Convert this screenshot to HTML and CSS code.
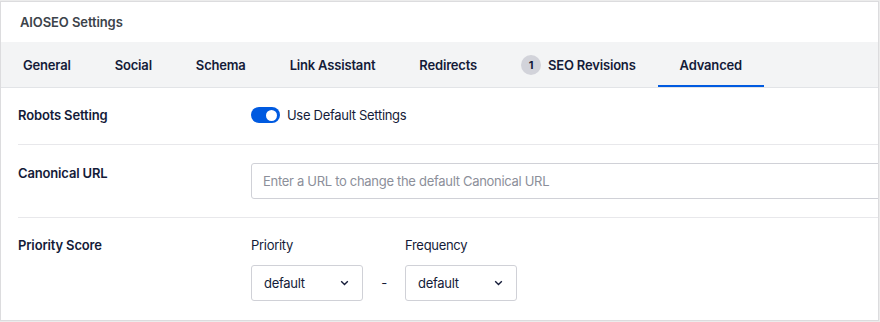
FILE: index.html
```html
<!DOCTYPE html>
<html lang="en">
<head>
  <meta charset="UTF-8">
  <title>AIOSEO Settings</title>
  <link rel="stylesheet" href="styles.css">
</head>
<body>
  <div class="metabox">
    <div class="metabox-header">AIOSEO Settings</div>

    <nav class="tabs">
      <div class="tab">General</div>
      <div class="tab">Social</div>
      <div class="tab">Schema</div>
      <div class="tab">Link Assistant</div>
      <div class="tab">Redirects</div>
      <div class="tab"><span class="badge">1</span>SEO Revisions</div>
      <div class="tab active">Advanced</div>
    </nav>

    <div class="settings">
      <div class="row">
        <div class="row-label">Robots Setting</div>
        <div class="row-content">
          <label class="toggle-wrap">
            <span class="toggle"><span class="knob"></span></span>
            Use Default Settings
          </label>
        </div>
      </div>

      <div class="row row-input">
        <div class="row-label">Canonical URL</div>
        <div class="row-content">
          <input class="text-input" type="text" placeholder="Enter a URL to change the default Canonical URL">
        </div>
      </div>

      <div class="row last">
        <div class="row-label">Priority Score</div>
        <div class="row-content priority">
          <div class="field">
            <div class="field-label">Priority</div>
            <div class="select">
              <span>default</span>
              <svg width="9" height="6" viewBox="0 0 9 6"><path d="M1.2 1.3 L4.5 4.5 L7.8 1.3" fill="none" stroke="#141b38" stroke-width="1.4"/></svg>
            </div>
          </div>
          <div class="dash">-</div>
          <div class="field">
            <div class="field-label">Frequency</div>
            <div class="select">
              <span>default</span>
              <svg width="9" height="6" viewBox="0 0 9 6"><path d="M1.2 1.3 L4.5 4.5 L7.8 1.3" fill="none" stroke="#141b38" stroke-width="1.4"/></svg>
            </div>
          </div>
        </div>
      </div>
    </div>
  </div>
</body>
</html>
```

FILE: styles.css
```css
* {
  margin: 0;
  padding: 0;
  box-sizing: border-box;
}

body {
  font-family: Inter, 'Liberation Sans', sans-serif;
  font-size: 13px;
  color: #141b38;
  background: #ececec;
  width: 880px;
  height: 322px;
  overflow: hidden;
}

.metabox {
  margin-top: 1px;
  width: 879px;
  height: 320px;
  background: #fff;
  border: 1px solid #dcdcde;
  overflow: hidden;
}

.metabox-header {
  height: 40px;
  padding: 0 19px;
  display: flex;
  align-items: center;
  font-weight: 600;
  color: #3c434a;
  letter-spacing: -0.1px;
}

.tabs {
  display: flex;
  height: 46px;
  background: #f3f4f5;
  border-bottom: 1px solid #e2e4e7;
}

.tab {
  display: flex;
  align-items: center;
  padding: 0 22px;
  font-weight: 600;
  letter-spacing: -0.18px;
}

.tab.active {
  box-shadow: inset 0 -2px 0 #005ae0;
}

.badge {
  width: 20px;
  height: 20px;
  border-radius: 50%;
  background: #d2d3da;
  font-size: 11px;
  font-weight: 700;
  display: flex;
  align-items: center;
  justify-content: center;
  margin-right: 7px;
  letter-spacing: 0;
}

.settings {
  padding-left: 17px;
}

.row {
  display: flex;
  padding: 17px 0 19px;
  border-bottom: 1px solid #e8e8eb;
}

.row-input {
  padding: 18px 0 18px;
}

.row.last {
  border-bottom: none;
}

.row-label {
  width: 233px;
  flex-shrink: 0;
  font-weight: 600;
  line-height: 20px;
  letter-spacing: -0.15px;
}

.row-content {
  flex: 1;
  line-height: 20px;
  letter-spacing: -0.3px;
}

.toggle-wrap {
  display: flex;
  align-items: center;
  gap: 7px;
}

.toggle {
  width: 29px;
  height: 16px;
  border-radius: 8px;
  background: #005ae0;
  display: flex;
  align-items: center;
  justify-content: flex-end;
  padding-right: 3px;
}

.knob {
  width: 11px;
  height: 11px;
  border-radius: 50%;
  background: #fff;
}

.text-input {
  display: block;
  width: 660px;
  height: 36px;
  border: 1px solid #d0d1d7;
  border-radius: 3px;
  padding: 0 11px;
  font-family: inherit;
  font-size: 13px;
  letter-spacing: -0.3px;
  color: #141b38;
}

.text-input::placeholder {
  color: #8c8f9a;
}

.priority {
  display: flex;
  align-items: flex-end;
}

.field-label {
  margin-bottom: 10px;
}

.select {
  width: 112px;
  height: 36px;
  border: 1px solid #d0d1d7;
  border-radius: 3px;
  display: flex;
  align-items: center;
  justify-content: space-between;
  padding: 0 13px 0 12px;
}

.dash {
  width: 42px;
  height: 36px;
  display: flex;
  align-items: center;
  justify-content: center;
}
```
